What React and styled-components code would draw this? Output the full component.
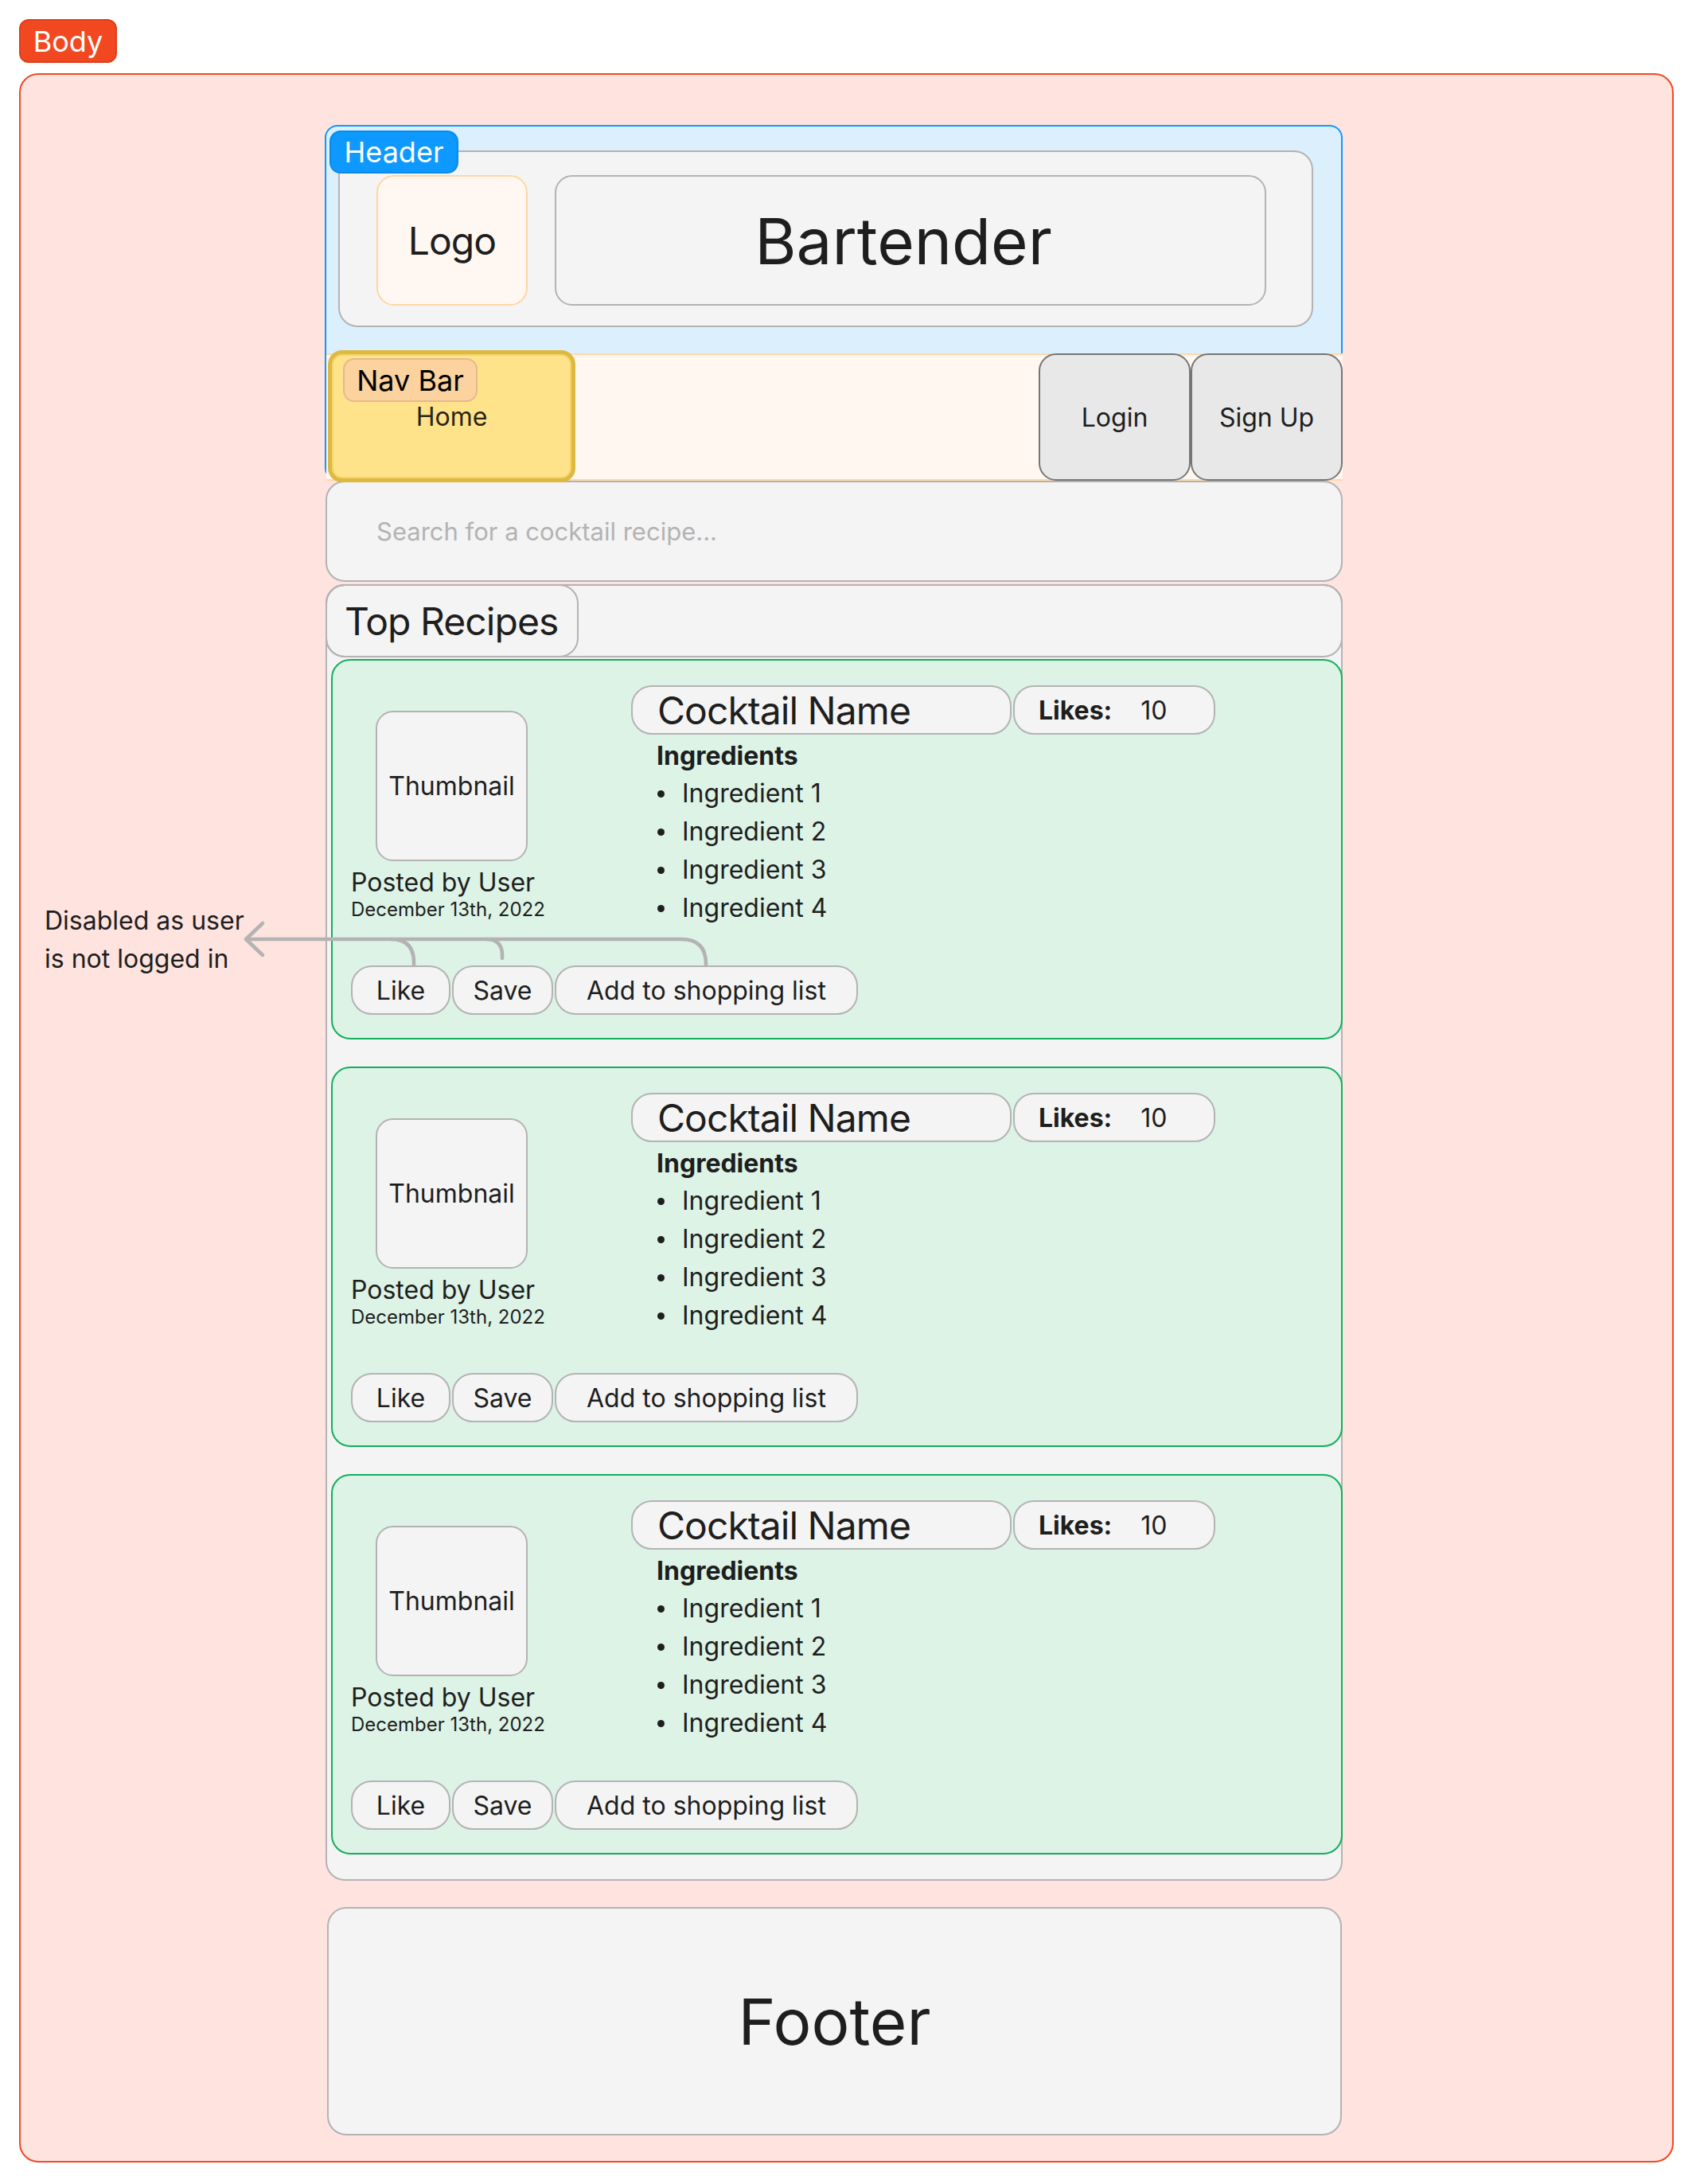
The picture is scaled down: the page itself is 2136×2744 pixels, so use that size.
import React from 'react';
import styled, { createGlobalStyle } from 'styled-components';

const GlobalStyle = createGlobalStyle`
  html, body {
    margin: 0;
    padding: 0;
    background: #ffffff;
  }
  body {
    font-family: Inter, "Noto Sans", sans-serif;
    color: #1e1e1e;
  }
  * {
    box-sizing: border-box;
  }
`;

const Page = styled.div`
  width: 2136px;
  padding: 24px;
`;

const Tag = styled.div`
  display: flex;
  align-items: center;
  justify-content: center;
  width: ${p => p.$w}px;
  height: ${p => p.$h || 54}px;
  border-radius: ${p => p.$r || 12}px;
  background: ${p => p.$bg};
  border: 2px solid ${p => p.$line};
  color: ${p => p.$color || '#ffffff'};
  font-size: 36px;
  line-height: 1;
`;

const FloatingTag = styled(Tag)`
  position: absolute;
  left: ${p => p.$x}px;
  top: ${p => p.$y}px;
  z-index: 2;
`;

const BodyFrame = styled.div`
  position: relative;
  width: 2079px;
  margin-top: 13px;
  padding: 63px 0 32px 383px;
  border: 2px solid #f24822;
  border-radius: 24px;
  background: #fee3df;
`;

const Column = styled.div`
  display: flex;
  flex-direction: column;
  width: 1278px;
`;

const HeaderFrame = styled.header`
  position: relative;
  display: flex;
  flex-direction: column;
  width: 1279px;
  margin-left: -1px;
  border: 2px solid #0d99ff;
  border-radius: 16px;
  background: #dbeffd;
`;

const Masthead = styled.div`
  display: flex;
  gap: 34px;
  margin: 30px 35px 0 15px;
  padding: 29px 57px 25px 46px;
  border: 2px solid #b3b3b3;
  border-radius: 24px;
  background: #f4f4f4;
`;

const LogoBox = styled.div`
  display: flex;
  align-items: center;
  justify-content: center;
  width: 190px;
  height: 164px;
  border: 2px solid #ffd6a3;
  border-radius: 22px;
  background: #fff7f1;
  font-size: 48px;
  letter-spacing: -0.02em;
`;

const TitleBox = styled.div`
  flex: 1;
  display: flex;
  align-items: center;
  justify-content: center;
  padding-right: 18px;
  height: 164px;
  border: 2px solid #b3b3b3;
  border-radius: 22px;
  background: #f4f4f4;
  font-size: 80px;
`;

const NavBar = styled.nav`
  position: relative;
  display: flex;
  height: 160px;
  margin: 33px -2px -2px 0;
  border-top: 2px solid #ffd9a8;
  border-bottom: 2px solid #ffd9a8;
  background: #fff7f0;
`;

const HomeLink = styled.div`
  display: flex;
  align-items: center;
  justify-content: center;
  width: 311px;
  height: 166px;
  margin: -6px 0 0 2px;
  border: 5px solid rgba(214, 172, 44, 0.8);
  border-radius: 18px;
  background: #ffe38a;
  box-shadow: inset 0 0 0 2px #f3d56c;
  color: #2a2617;
  font-size: 32px;
`;

const NavButton = styled.div`
  display: flex;
  align-items: center;
  justify-content: center;
  width: 191px;
  height: 160px;
  margin: -2px 0;
  margin-left: ${p => (p.$first ? 'auto' : '0')};
  border: 2px solid #757575;
  border-radius: 22px;
  background: #e8e8e8;
  font-size: 32px;
`;

const Search = styled.input`
  display: block;
  width: 100%;
  height: 127px;
  margin: 0;
  padding: 0 0 0 62px;
  border: 2px solid #b3b3b3;
  border-radius: 24px;
  background: #f4f4f4;
  font-family: Inter, "Noto Sans", sans-serif;
  font-size: 31px;
  color: #1e1e1e;
  outline: none;

  &::placeholder {
    color: #b3b3b3;
  }
`;

const Recipes = styled.section`
  margin-top: 3px;
  padding-bottom: 31px;
  border: 2px solid #b3b3b3;
  border-radius: 24px;
  background: #f4f4f4;
`;

const RecipesHead = styled.div`
  display: flex;
  height: 92px;
  margin: -2px -2px 0;
  border: 2px solid #b3b3b3;
  border-radius: 24px;
`;

const SectionTab = styled.h2`
  display: flex;
  align-items: center;
  width: 318px;
  height: 92px;
  margin: -2px 0 -2px -2px;
  padding-left: 22px;
  border: 2px solid #b3b3b3;
  border-radius: 24px;
  font-size: 48px;
  font-weight: 400;
  letter-spacing: -0.02em;
`;

const CardList = styled.div`
  display: flex;
  flex-direction: column;
  gap: 34px;
  margin-top: 2px;
  padding-left: 5px;
`;

const Card = styled.article`
  display: flex;
  flex-direction: column;
  width: 1271px;
  padding: 31px 0 29px 23px;
  border: 2px solid #14ae5c;
  border-radius: 24px;
  background: #dcf3e6;
`;

const CardTop = styled.div`
  display: flex;
  align-items: flex-start;
  height: 303px;
`;

const Author = styled.div`
  display: flex;
  flex-direction: column;
  width: 253px;
  padding-top: 32px;
`;

const Thumb = styled.div`
  display: flex;
  align-items: center;
  justify-content: center;
  align-self: center;
  width: 191px;
  height: 189px;
  border: 2px solid #b3b3b3;
  border-radius: 22px;
  background: #f4f4f4;
  font-size: 32px;
`;

const Posted = styled.div`
  margin-top: 8px;
  font-size: 32px;
  line-height: 38px;
  white-space: nowrap;
`;

const PostDate = styled.div`
  font-size: 24px;
  line-height: 30px;
  white-space: nowrap;
`;

const Details = styled.div`
  display: flex;
  flex-direction: column;
  margin-left: 99px;
`;

const PillRow = styled.div`
  display: flex;
  gap: 2px;
`;

const Pill = styled.div`
  display: flex;
  align-items: center;
  gap: 36px;
  width: ${p => p.$w}px;
  height: 62px;
  padding-left: ${p => p.$pad}px;
  border: 2px solid #b3b3b3;
  border-radius: 26px;
  background: #f4f4f4;
  font-size: ${p => p.$size}px;
  letter-spacing: ${p => (p.$size > 40 ? '-0.02em' : '0')};
`;

const Strong = styled.span`
  font-weight: 700;
`;

const Heading = styled.div`
  margin-top: 5px;
  padding-left: 32px;
  font-size: 32px;
  font-weight: 700;
  line-height: 44px;
`;

const IngredientList = styled.ul`
  margin: 0;
  padding: 0 0 0 33px;
  list-style: none;
`;

const Ingredient = styled.li`
  display: flex;
  align-items: center;
  height: 48px;
  font-size: 32px;

  &::before {
    content: '';
    width: 9px;
    height: 9px;
    margin: 3px 22px 0 0;
    border-radius: 50%;
    background: #1e1e1e;
  }
`;

const Actions = styled.div`
  display: flex;
  gap: 2px;
  margin-top: 49px;
`;

const ActionButton = styled.button`
  display: flex;
  align-items: center;
  justify-content: center;
  width: ${p => p.$w}px;
  height: 62px;
  padding: 0;
  border: 2px solid #b3b3b3;
  border-radius: 26px;
  background: #f4f4f4;
  color: #1e1e1e;
  font-family: Inter, "Noto Sans", sans-serif;
  font-size: 32px;
`;

const Footer = styled.footer`
  display: flex;
  align-items: center;
  justify-content: center;
  width: 1275px;
  height: 287px;
  margin: 33px 0 0 2px;
  border: 2px solid #b3b3b3;
  border-radius: 24px;
  background: #f4f4f4;
  font-size: 80px;
`;

const Note = styled.div`
  position: absolute;
  left: 30px;
  top: 1039px;
  font-size: 32px;
  line-height: 48px;
`;

const Connector = styled.svg`
  position: absolute;
  left: 274px;
  top: 1057px;
  overflow: visible;
`;

const ingredients = ['Ingredient 1', 'Ingredient 2', 'Ingredient 3', 'Ingredient 4'];

function RecipeCard() {
  return (
    <Card>
      <CardTop>
        <Author>
          <Thumb>Thumbnail</Thumb>
          <Posted>Posted by User</Posted>
          <PostDate>December 13th, 2022</PostDate>
        </Author>
        <Details>
          <PillRow>
            <Pill $w={478} $pad={31} $size={48}>Cocktail Name</Pill>
            <Pill $w={254} $pad={30} $size={32}>
              <Strong>Likes:</Strong>
              <span>10</span>
            </Pill>
          </PillRow>
          <Heading>Ingredients</Heading>
          <IngredientList>
            {ingredients.map(item => (
              <Ingredient key={item}>{item}</Ingredient>
            ))}
          </IngredientList>
        </Details>
      </CardTop>
      <Actions>
        <ActionButton $w={125}>Like</ActionButton>
        <ActionButton $w={127}>Save</ActionButton>
        <ActionButton $w={381}>Add to shopping list</ActionButton>
      </Actions>
    </Card>
  );
}

export default function App() {
  return (
    <Page>
      <GlobalStyle />
      <Tag $w={123} $h={55} $bg="#f24822" $line="#dd3f1c">Body</Tag>
      <BodyFrame>
        <Column>
          <HeaderFrame>
            <FloatingTag $x={4} $y={5} $w={162} $r={14} $bg="#0d99ff" $line="#0b8ae8">
              Header
            </FloatingTag>
            <Masthead>
              <LogoBox>Logo</LogoBox>
              <TitleBox>Bartender</TitleBox>
            </Masthead>
            <NavBar>
              <FloatingTag $x={21} $y={4} $w={169} $h={55} $r={14} $bg="#fcd29e" $line="#e5b98f" $color="#000000">
                Nav Bar
              </FloatingTag>
              <HomeLink>Home</HomeLink>
              <NavButton $first>Login</NavButton>
              <NavButton>Sign Up</NavButton>
            </NavBar>
          </HeaderFrame>

          <Search placeholder="Search for a cocktail recipe..." />

          <Recipes>
            <RecipesHead>
              <SectionTab>Top Recipes</SectionTab>
            </RecipesHead>
            <CardList>
              <RecipeCard />
              <RecipeCard />
              <RecipeCard />
            </CardList>
          </Recipes>

          <Footer>Footer</Footer>
        </Column>

        <Note>
          Disabled as user
          <br />
          is not logged in
        </Note>
        <Connector width="620" height="70" viewBox="0 0 620 70" fill="none">
          <g stroke="#b3b3b3" strokeWidth="4.5" strokeLinecap="round" strokeLinejoin="round">
            <path d="M9 29 H556 Q587 29 587 60 V62" />
            <path d="M191 29 Q220 29 220 58 V62" />
            <path d="M311 29 Q331 29 331 49 V53" />
            <path d="M30 9 L9 29 L30 49" />
          </g>
        </Connector>
      </BodyFrame>
    </Page>
  );
}
